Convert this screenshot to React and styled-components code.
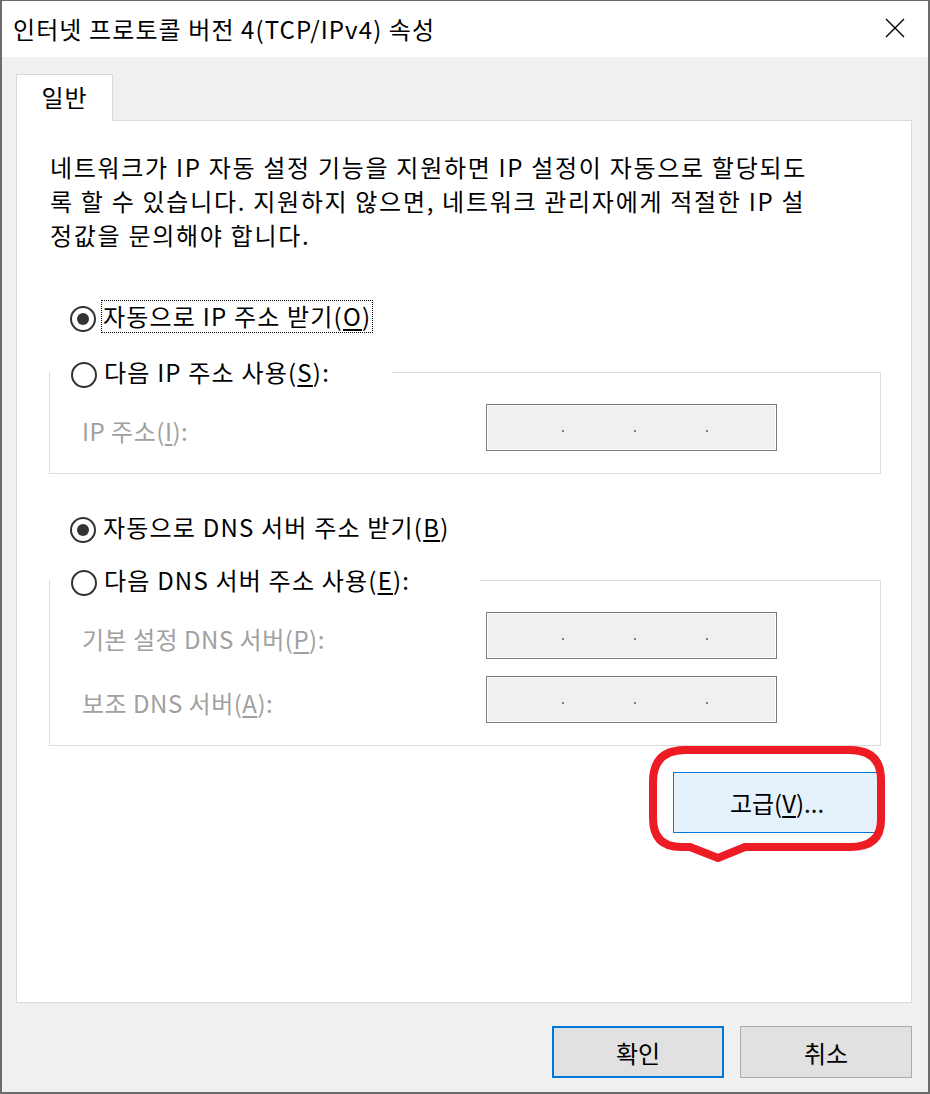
import React from 'react';
import styled, { createGlobalStyle } from 'styled-components';

const GlobalStyle = createGlobalStyle`
    html, body {
        margin: 0;
        padding: 0;
        background: #fff;
    }

    body {
        font-family: "Noto Sans CJK KR", "Noto Sans", sans-serif;
        font-size: 24px;
        color: #000;
    }

    * {
        box-sizing: border-box;
    }
`;

const Window = styled.div`
    width: 930px;
    height: 1094px;
    display: flex;
    flex-direction: column;
    border: 2px solid #6b6b6b;
    border-top-width: 1px;
    background: #f0f0f0;
`;

const TitleBar = styled.div`
    height: 56px;
    flex-shrink: 0;
    display: flex;
    align-items: center;
    justify-content: space-between;
    padding: 0 23px 2px 11px;
    background: #fff;
`;

const Title = styled.div`
    font-size: 24px;
    letter-spacing: 1.1px;
`;

const CloseButton = styled.div`
    width: 20px;
    height: 20px;
    display: flex;

    & > svg {
        width: 20px;
        height: 20px;
    }
`;

const Body = styled.div`
    flex: 1;
    display: flex;
    flex-direction: column;
    padding: 17px 16px 0 14px;
`;

const TabStrip = styled.div`
    display: flex;
`;

const Tab = styled.div`
    width: 97px;
    height: 47px;
    margin-bottom: -1px;
    position: relative;
    z-index: 1;
    display: flex;
    justify-content: center;
    padding-top: 5px;
    background: #fff;
    border: 1px solid #d9d9d9;
    border-bottom: none;
    line-height: 34px;
    letter-spacing: 1px;
`;

const Panel = styled.div`
    height: 883px;
    padding: 29px 30px 0 32px;
    background: #fff;
    border: 1px solid #d9d9d9;
`;

const Description = styled.div`
    padding-left: 1px;
    line-height: 34px;
    letter-spacing: 1.7px;
    white-space: nowrap;
`;

const Options = styled.div`
    margin-top: 48px;
    display: flex;
    flex-direction: column;
`;

const RadioRow = styled.div`
    height: 33px;
    display: flex;
    align-items: center;
    padding-left: 21px;
    margin-top: ${(p) => p.$gap || 0}px;
`;

const RadioCircle = styled.span`
    width: 26px;
    height: 26px;
    flex-shrink: 0;
    display: flex;
    align-items: center;
    justify-content: center;
    border: 2px solid #333;
    border-radius: 50%;
    background: #fff;
    margin-top: 4px;

    &::after {
        content: "";
        width: 12px;
        height: 12px;
        border-radius: 50%;
        background: ${(p) => (p.$checked ? '#333' : 'transparent')};
    }
`;

const RadioLabel = styled.span`
    margin-left: 5px;
    padding: 0 2px;
    height: 33px;
    line-height: 32px;
    letter-spacing: 1.2px;
    outline: ${(p) => (p.$focused ? '1px dotted #000' : 'none')};
    outline-offset: -1px;
    white-space: nowrap;

    & u {
        text-underline-offset: 3px;
    }
`;

const GroupBox = styled.div`
    margin-top: ${(p) => p.$gap}px;
    padding: 0 0 22px 32px;
    border: 1px solid #dcdcdc;
`;

const Legend = styled.div`
    width: ${(p) => p.$width}px;
    margin: -17px 0 0 -32px;
    background: #fff;
`;

const FieldRow = styled.div`
    display: grid;
    grid-template-columns: 404px 291px;
    align-items: center;
    margin-top: ${(p) => p.$gap}px;
`;

const FieldLabel = styled.span`
    color: #a0a0a0;
    padding-top: 5px;
    letter-spacing: 0.5px;
    white-space: nowrap;

    & u {
        text-underline-offset: 3px;
    }
`;

const IpBox = styled.div`
    height: 47px;
    display: flex;
    align-items: center;
    gap: 70px;
    padding: 6px 0 0 75px;
    background: #f0f0f0;
    border: 1px solid #7a7a7a;
    box-shadow: inset 0 0 0 1px #fff;
`;

const Dot = styled.span`
    width: 2px;
    height: 2px;
    background: #8a7f70;
`;

const AdvancedRow = styled.div`
    margin-top: 26px;
    display: flex;
    justify-content: flex-end;
`;

const AdvancedWrap = styled.div`
    position: relative;
`;

const Button = styled.button`
    width: ${(p) => p.$width}px;
    height: ${(p) => p.$height}px;
    font-family: inherit;
    font-size: 24px;
    color: #000;
    background: ${(p) => (p.$hover ? '#e5f1fb' : '#e1e1e1')};
    border: ${(p) => (p.$default ? '2px solid #0078d7' : p.$hover ? '1px solid #0078d7' : '1px solid #adadad')};
    padding: 0;
    cursor: default;

    & u {
        text-underline-offset: 3px;
    }
`;

const Callout = styled.svg`
    position: absolute;
    left: -28px;
    top: -30px;
    width: 244px;
    height: 126px;
    overflow: visible;
    pointer-events: none;
`;

const ButtonRow = styled.div`
    margin-top: 23px;
    display: flex;
    justify-content: flex-end;
    gap: 16px;
`;

const descriptionLines = [
    '네트워크가 IP 자동 설정 기능을 지원하면 IP 설정이 자동으로 할당되도',
    '록 할 수 있습니다. 지원하지 않으면, 네트워크 관리자에게 적절한 IP 설',
    '정값을 문의해야 합니다.',
];

const Radio = ({ checked, focused, children }) => (
    <>
        <RadioCircle $checked={checked} />
        <RadioLabel $focused={focused}>{children}</RadioLabel>
    </>
);

const IpField = () => (
    <IpBox>
        <Dot />
        <Dot />
        <Dot />
    </IpBox>
);

const App = () => {
    return (
        <>
            <GlobalStyle />
            <Window>
                <TitleBar>
                    <Title>인터넷 프로토콜 버전 4(TCP/IPv4) 속성</Title>
                    <CloseButton>
                        <svg viewBox="0 0 20 20" fill="none" stroke="#000" strokeWidth="1.4">
                            <path d="M1 1 L19 19 M19 1 L1 19" />
                        </svg>
                    </CloseButton>
                </TitleBar>
                <Body>
                    <TabStrip>
                        <Tab>일반</Tab>
                    </TabStrip>
                    <Panel>
                        <Description>
                            {descriptionLines.map((line) => (
                                <div key={line}>{line}</div>
                            ))}
                        </Description>
                        <Options>
                            <RadioRow>
                                <Radio checked focused>
                                    자동으로 IP 주소 받기(<u>O</u>)
                                </Radio>
                            </RadioRow>
                            <GroupBox $gap={39}>
                                <Legend $width={342}>
                                    <RadioRow>
                                        <Radio>
                                            다음 IP 주소 사용(<u>S</u>):
                                        </Radio>
                                    </RadioRow>
                                </Legend>
                                <FieldRow $gap={15}>
                                    <FieldLabel>
                                        IP 주소(<u>I</u>):
                                    </FieldLabel>
                                    <IpField />
                                </FieldRow>
                            </GroupBox>
                            <RadioRow $gap={37}>
                                <Radio checked>
                                    자동으로 DNS 서버 주소 받기(<u>B</u>)
                                </Radio>
                            </RadioRow>
                            <GroupBox $gap={36}>
                                <Legend $width={430}>
                                    <RadioRow>
                                        <Radio>
                                            다음 DNS 서버 주소 사용(<u>E</u>):
                                        </Radio>
                                    </RadioRow>
                                </Legend>
                                <FieldRow $gap={15}>
                                    <FieldLabel>
                                        기본 설정 DNS 서버(<u>P</u>):
                                    </FieldLabel>
                                    <IpField />
                                </FieldRow>
                                <FieldRow $gap={17}>
                                    <FieldLabel>
                                        보조 DNS 서버(<u>A</u>):
                                    </FieldLabel>
                                    <IpField />
                                </FieldRow>
                            </GroupBox>
                            <AdvancedRow>
                                <AdvancedWrap>
                                    <Button $width={208} $height={61} $hover>
                                        고급(<u>V</u>)...
                                    </Button>
                                    <Callout viewBox="0 0 244 126">
                                        <path
                                            d="M40 8 H205 Q236 8 236 38 V78 Q236 105 205 105 H100 L73 116 L45 105 H36 Q8 105 8 76 V40 Q8 8 40 8 Z"
                                            fill="none"
                                            stroke="#ed1c24"
                                            strokeWidth="8"
                                            strokeLinejoin="round"
                                        />
                                    </Callout>
                                </AdvancedWrap>
                            </AdvancedRow>
                        </Options>
                    </Panel>
                    <ButtonRow>
                        <Button $width={172} $height={52} $default>
                            확인
                        </Button>
                        <Button $width={172} $height={52}>
                            취소
                        </Button>
                    </ButtonRow>
                </Body>
            </Window>
        </>
    );
};

export default App;
